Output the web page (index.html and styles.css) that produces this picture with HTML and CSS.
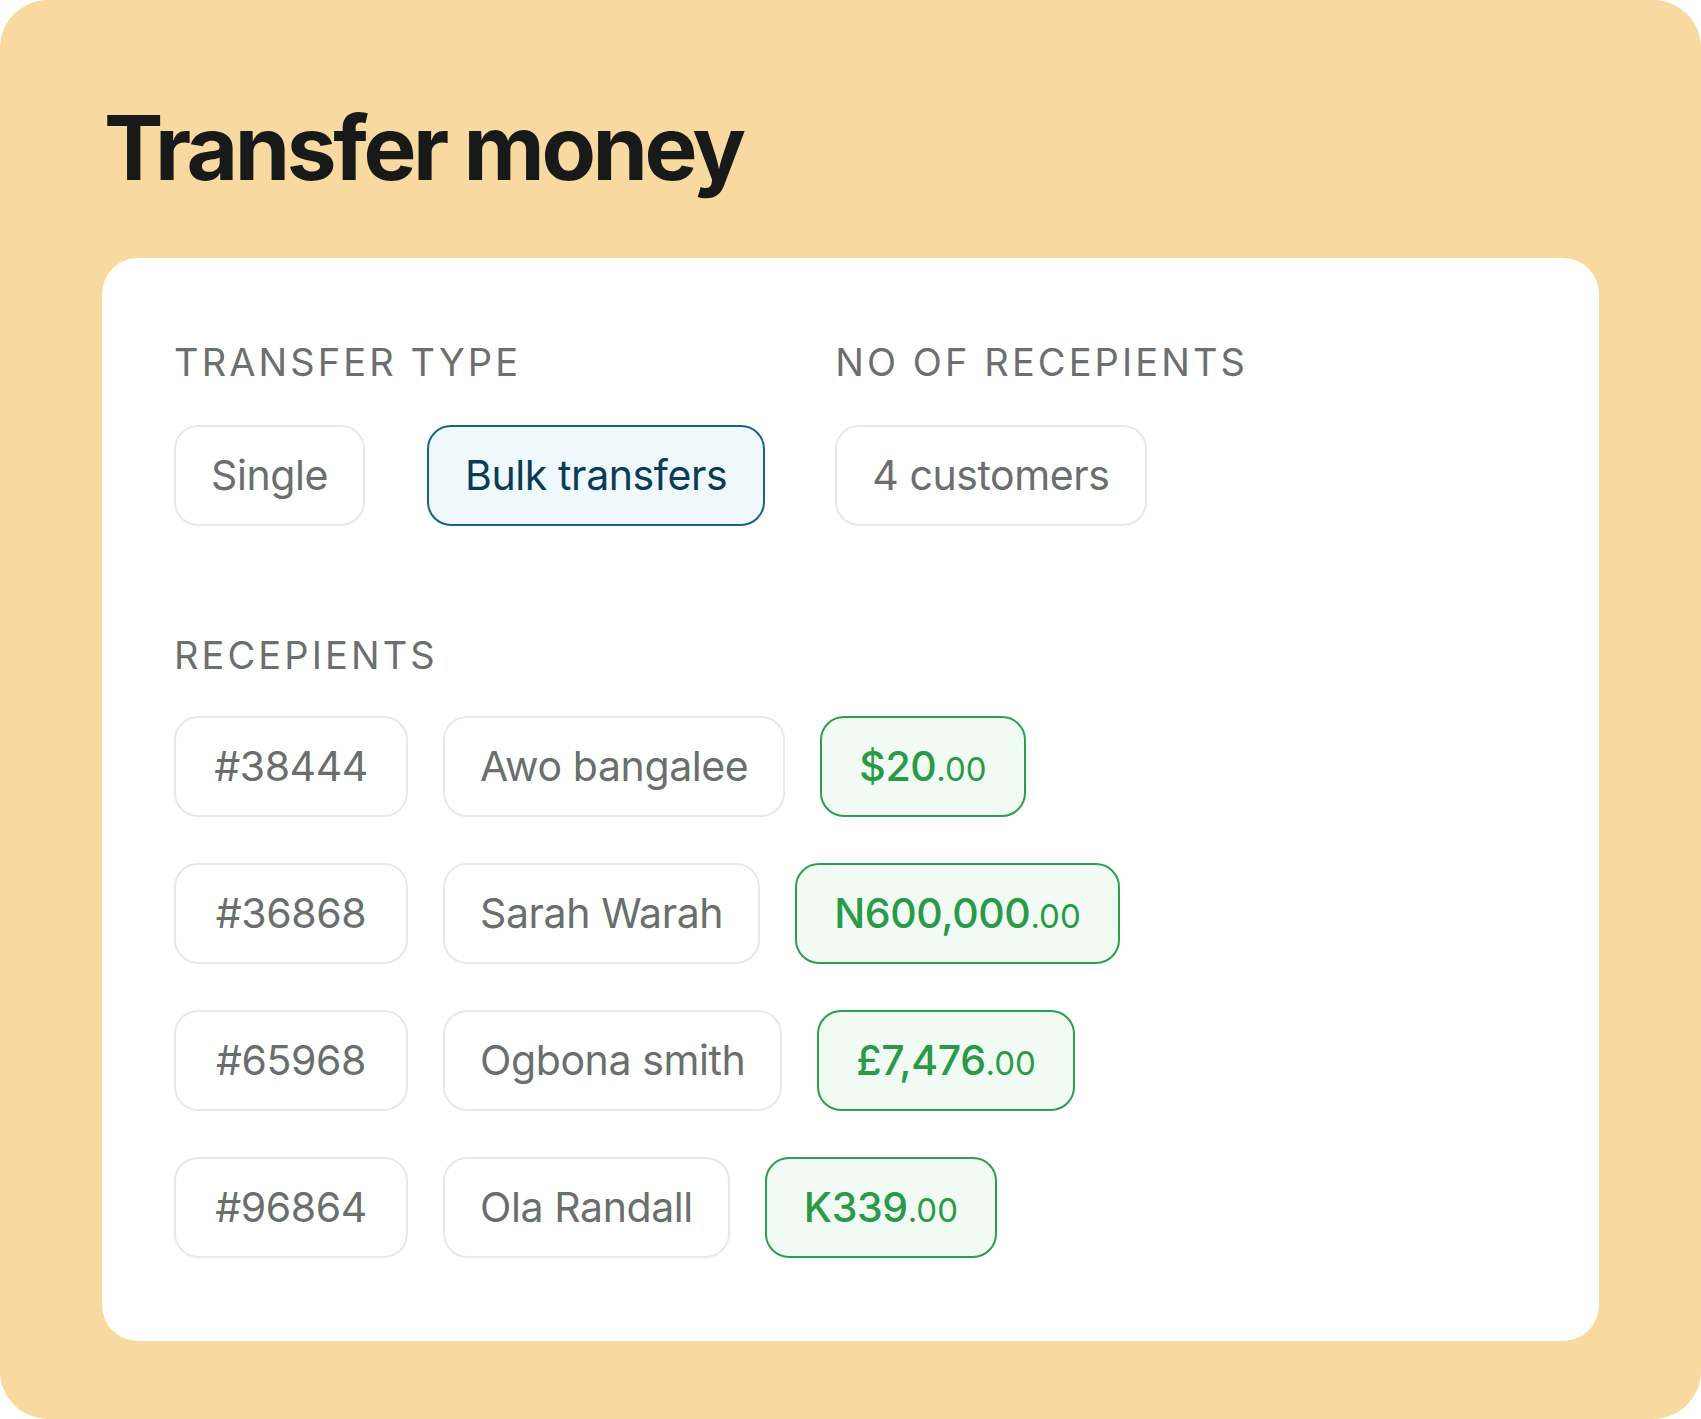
FILE: index.html
```html
<!DOCTYPE html>
<html lang="en">
<head>
<meta charset="utf-8">
<title>Transfer money</title>
<link rel="stylesheet" href="styles.css">
</head>
<body>
<div class="frame">
  <h1 class="title">Transfer money</h1>
  <div class="card">
    <div class="top-row">
      <div class="group">
        <div class="label">TRANSFER TYPE</div>
        <div class="chips chips-type">
          <div class="chip">Single</div>
          <div class="chip chip-active">Bulk transfers</div>
        </div>
      </div>
      <div class="group">
        <div class="label">NO OF RECEPIENTS</div>
        <div class="chips">
          <div class="chip">4 customers</div>
        </div>
      </div>
    </div>
    <div class="group recipients">
      <div class="label">RECEPIENTS</div>
      <div class="rows">
        <div class="row">
          <div class="chip chip-id">#38444</div>
          <div class="chip">Awo bangalee</div>
          <div class="chip chip-amount"><span class="amt">$20</span><span class="cents">.00</span></div>
        </div>
        <div class="row">
          <div class="chip chip-id">#36868</div>
          <div class="chip">Sarah Warah</div>
          <div class="chip chip-amount"><span class="amt">N600,000</span><span class="cents">.00</span></div>
        </div>
        <div class="row">
          <div class="chip chip-id">#65968</div>
          <div class="chip">Ogbona smith</div>
          <div class="chip chip-amount"><span class="amt">£7,476</span><span class="cents">.00</span></div>
        </div>
        <div class="row">
          <div class="chip chip-id">#96864</div>
          <div class="chip">Ola Randall</div>
          <div class="chip chip-amount"><span class="amt">K339</span><span class="cents">.00</span></div>
        </div>
      </div>
    </div>
  </div>
</div>
</body>
</html>
```

FILE: styles.css
```css
html, body {
  margin: 0;
  padding: 0;
  background: #ffffff;
}

body {
  font-family: Inter, "Noto Sans", "Liberation Sans", sans-serif;
}

.frame {
  width: 1701px;
  height: 1419px;
  box-sizing: border-box;
  background: #f8d9a0;
  border-radius: 48px;
  padding: 94px 102px 0;
}

.title {
  margin: 0 0 56px;
  font-size: 89px;
  line-height: 1.21;
  font-weight: 700;
  letter-spacing: -3.4px;
  color: #181a19;
  padding-left: 2px;
}

.card {
  background: #ffffff;
  border-radius: 36px;
  height: 1083px;
  box-sizing: border-box;
  padding: 82px 72px 0;
}

.top-row {
  display: flex;
  gap: 70px;
}

.group {
  display: flex;
  flex-direction: column;
  gap: 39px;
}

.label {
  font-size: 38px;
  line-height: 1.21;
  letter-spacing: 3.1px;
  color: #6b706e;
  font-weight: 400;
}

.chips {
  display: flex;
  gap: 62px;
}

.chip {
  height: 101px;
  box-sizing: border-box;
  display: inline-flex;
  align-items: center;
  padding: 0 35px;
  border: 2px solid #e3ebe8;
  border-radius: 24px;
  font-size: 41px;
  letter-spacing: -0.4px;
  color: #6a6f6d;
  background: #ffffff;
  white-space: nowrap;
}

.chip-active {
  border: 2.5px solid #17628f;
  background: #eef8fd;
  color: #0c3b55;
  padding: 0 36px;
}

.recipients {
  margin-top: 107px;
  gap: 37px;
}

.rows {
  display: flex;
  flex-direction: column;
  gap: 46px;
}

.row {
  display: flex;
  gap: 35px;
}

.chip-id {
  width: 234px;
  justify-content: center;
  padding: 0;
}

.chip-amount {
  border: 2.5px solid #2e9e4f;
  background: #f1faf3;
  color: #2a9a48;
  padding: 0 37px;
}

.amt {
  font-weight: 500;
}

.cents {
  font-size: 33px;
  font-weight: 400;
  letter-spacing: 0;
  align-self: center;
  margin-top: 6px;
}
```
